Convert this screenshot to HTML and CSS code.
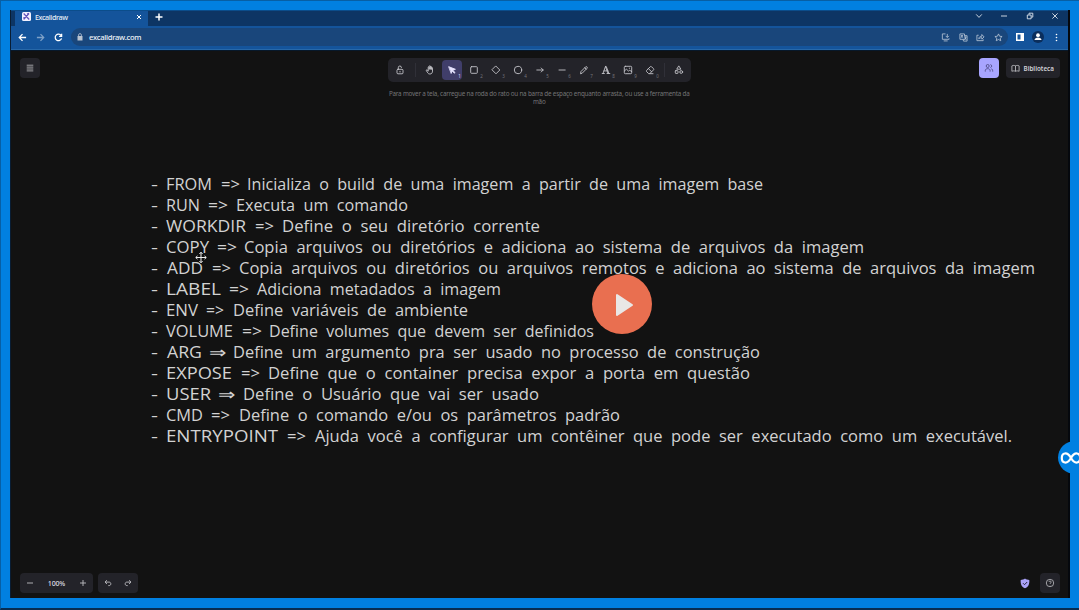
FILE: index.html
```html
<!DOCTYPE html>
<html lang="pt">
<head>
<meta charset="utf-8">
<title>Excalidraw</title>
<link rel="stylesheet" href="styles.css">
</head>
<body>
<main class="screen">
  <section class="browser">
    <header class="tabs">
      <div class="tab">
        <svg class="logo" viewBox="0 0 9 9"><rect width="9" height="9" rx="1.5" fill="#f4f2ff"/><path d="M1.7 1.5 7.2 7.5M7 1.5 1.8 7.4M5 2l2-.7M2 5v2.5" stroke="#6355bb" stroke-width="1.2"/></svg>
        <span class="tab-title">Excalidraw</span>
        <svg class="tab-close" viewBox="0 0 6 6"><path d="m1 1 4 4M5 1 1 5"/></svg>
      </div>
      <svg class="new-tab" viewBox="0 0 8 8"><path d="M4 .5v7M.5 4h7"/></svg>
      <div class="window-buttons">
        <svg viewBox="0 0 8 8"><path d="m1.2 2.4 2.8 3 2.8-3"/></svg>
        <svg viewBox="0 0 8 8"><path d="M1 4h6"/></svg>
        <svg viewBox="0 0 8 8"><path d="M1.3 3h3.8v3.8H1.3zM3 2.8V1.2h3.8v3.9H5.2"/></svg>
        <svg viewBox="0 0 8 8"><path d="m1.4 1.4 5.2 5.2m0-5.2L1.4 6.6"/></svg>
      </div>
    </header>
    <nav class="address-row">
      <svg class="nav" viewBox="0 0 10 10"><path d="M9 5H1.5M5 1.3 1.4 5 5 8.7"/></svg>
      <svg class="nav faded" viewBox="0 0 10 10"><path d="M1 5h7.5M5 1.3 8.6 5 5 8.7"/></svg>
      <svg class="nav" viewBox="0 0 10 10"><path d="M8 3A3.6 3.6 0 1 0 8.4 6M8.5.8v2.9H5.6"/></svg>
      <div class="address">
        <svg class="lock" viewBox="0 0 6 8"><path d="M.5 3h5v4.5h-5z" fill="#b9c3d0"/><path d="M1.6 3V2a1.4 1.4 0 0 1 2.8 0v1" fill="none" stroke="#b9c3d0" stroke-width=".8"/></svg>
        <span>excalidraw.com</span>
        <div class="address-icons">
          <svg viewBox="0 0 10 10"><path d="M5 1H1.5v6H9V6M3 8.8h4.4M7 1v3.8M5.2 3.2 7 5l1.8-1.8"/></svg>
          <svg viewBox="0 0 10 10"><path d="M1 1h5l1 6H1zM6 3h3v6H5L4.5 7M2.3 3h2.2M3.4 2.3c0 2-.7 2.8-1.4 3M2.6 3.5l2 1.6M6.6 4.5h1.8m-.9 0c0 1.4-.5 2-1 2.5m.2-1.5 1.5 1.7"/></svg>
          <svg viewBox="0 0 10 10"><path d="M3 2.5H1v6h7V7M3 6.4c.3-2 1.6-2.8 3.5-2.8V1.7L9 4.4 6.5 6.8V5.2C5 5.2 4 5.5 3 6.4z"/></svg>
          <svg viewBox="0 0 10 10"><path d="m5 1 1.2 2.6 2.8.3L6.9 5.8l.6 2.8L5 7.2 2.5 8.6l.6-2.8L1 3.9l2.8-.3z"/></svg>
        </div>
      </div>
      <svg class="panel" viewBox="0 0 8 8"><path d="M0 0h8v8H0z" fill="#fff"/><path d="M1.5 1.5h3v5h-3z" fill="#14549b"/></svg>
      <svg class="profile" viewBox="0 0 12 12"><circle cx="6" cy="6" r="6" fill="#0b2e5c"/><circle cx="6" cy="4.2" r="1.9" fill="#fff"/><path d="M2.5 9c0-3.5 7-3.5 7 0z" fill="#fff"/></svg>
      <svg class="dots" viewBox="0 0 3 8"><circle cx="1.5" cy="1" r=".8"/><circle cx="1.5" cy="4" r=".8"/><circle cx="1.5" cy="7" r=".8"/></svg>
    </nav>

    <div class="app">
      <div class="app-top">
        <button class="square"><svg viewBox="0 0 10 10"><path d="M1.7 2.2h6.6M1.7 4.1h6.6M1.7 6h6.6M1.7 7.9h6.6"/></svg></button>
        <div class="tool-column">
          <div class="toolbar">
            <span class="tool"><svg viewBox="0 0 10 10"><rect x="2" y="4.3" width="6" height="4.5" rx="1"/><path d="M3.3 4.2V2.7a1.6 1.6 0 0 1 3.2-.2M5 6.3v.7"/></svg></span>
            <i class="divider"></i>
            <span class="tool"><svg viewBox="0 0 10 10"><path d="M3.2 5.8V2.4c0-.9 1-.9 1 0v2-3c0-.9 1.1-.9 1.1 0v3-2.5c0-.9 1.1-.9 1.1 0v2.6-1.4c0-.9 1.1-.9 1.1 0v3c0 1.8-1 2.9-2.5 2.9-1.3 0-2-.5-2.7-1.8L1.3 5.5c-.2-.8.7-1 1.1-.5z"/></svg></span>
            <span class="tool active"><svg viewBox="0 0 10 10"><path d="m2 1.8 6.4 2.5-2.6 1L8 7.6l-.6.6-2.3-2.3-.8 2.2z"/></svg><small>1</small></span>
            <span class="tool"><svg viewBox="0 0 10 10"><rect x="1.7" y="1.7" width="6.6" height="6.6" rx=".8"/></svg><small>2</small></span>
            <span class="tool"><svg viewBox="0 0 10 10"><path d="m5 1.2 3.8 3.8L5 8.8 1.2 5z"/></svg><small>3</small></span>
            <span class="tool"><svg viewBox="0 0 10 10"><circle cx="5" cy="5" r="3.7"/></svg><small>4</small></span>
            <span class="tool"><svg viewBox="0 0 10 10"><path d="M1.8 5h6.4M6.2 3l2 2-2 2"/></svg><small>5</small></span>
            <span class="tool"><svg viewBox="0 0 10 10"><path d="M2 5h6.2"/></svg><small>6</small></span>
            <span class="tool"><svg viewBox="0 0 10 10"><path d="M1.6 8.4 2 6.5l4.6-4.6c.9-.9 2.3.5 1.4 1.4L3.5 7.9zM5.8 2.8l1.4 1.4"/></svg><small>7</small></span>
            <span class="tool"><svg viewBox="0 0 10 10"><path d="M1.2 8.5h2.2M6 8.5h2.8M2 8.4l2.5-7h.7l2.7 7M3 5.9h3.8M4.5 1.5 7 8.4"/></svg><small>8</small></span>
            <span class="tool"><svg viewBox="0 0 10 10"><rect x="1.3" y="1.3" width="7.4" height="7.4" rx="1"/><path d="m1.4 6 2-1.8 2.3 2 1-1 2 1.5M6.4 3.1v.3"/></svg><small>9</small></span>
            <span class="tool"><svg viewBox="0 0 10 10"><path d="M8 8.7H3.7L1.6 6.6c-.4-.4-.4-.8 0-1.2l3.7-3.7c.4-.4.8-.4 1.2 0l2 2c.4.4.4.8 0 1.2L4.8 8.6M3.5 3.7l3 3"/></svg><small>0</small></span>
            <i class="divider late"></i>
            <span class="tool"><svg viewBox="0 0 10 10"><path d="m5 1.2 1.9 3H3.1z"/><rect x="1.3" y="5.7" width="2.7" height="2.7" rx=".5"/><circle cx="7.2" cy="7" r="1.4"/></svg></span>
          </div>
          <p class="hint">Para mover a tela, carregue na roda do rato ou na barra de espaço enquanto arrasta, ou use a ferramenta da<br>mão</p>
        </div>
        <div class="right-tools">
          <button class="square people"><svg viewBox="0 0 10 10"><circle cx="3.7" cy="3" r="1.5"/><path d="M1.3 8.6V7.4c0-2.3 4.8-2.3 4.8 0v1.2M6.4 1.6c1.8.2 1.8 2.7 0 2.9M7.3 5.8c1 .2 1.4.8 1.4 2.8"/></svg></button>
          <button class="library"><svg viewBox="0 0 10 10"><path d="M5 2.1C3.7 1.4 2.3 1.4 1 2.1v6c1.3-.6 2.7-.6 4 0 1.3-.6 2.7-.6 4 0v-6c-1.3-.7-2.7-.7-4 0zm0 0v6"/></svg>Biblioteca</button>
        </div>
      </div>
      <div class="app-bottom">
        <div class="zoom-box"><svg viewBox="0 0 8 8"><path d="M1 4h6"/></svg><span>100%</span><svg viewBox="0 0 8 8"><path d="M1 4h6M4 1v6"/></svg></div>
        <div class="history"><svg viewBox="0 0 8 8"><path d="M3 1.2 1 3.1 3 5M1.1 3.1h4c2.3 0 2.3 3.5 0 3.5h-.8"/></svg><svg viewBox="0 0 8 8"><path d="m5 1.2 2 1.9L5 5M6.9 3.1h-4c-2.3 0-2.3 3.5 0 3.5h.8"/></svg></div>
        <svg class="shield" viewBox="0 0 10 11"><path d="M5 .5c1.3 1 2.7 1.4 4.3 1.4.3 4-.9 7-4.3 8.4C1.6 8.9.4 5.9.7 1.9 2.3 1.9 3.7 1.5 5 .5z" fill="#aaa2f8"/><path d="m3 5.2 1.5 1.5L7.2 4" fill="none" stroke="#24213e" stroke-width="1"/></svg>
        <button class="square"><svg viewBox="0 0 10 10"><circle cx="5" cy="5" r="3.7"/><path d="M3.9 4c.1-1.4 2.3-1.3 2.3.1C6.2 5 5 5 5 5.9M5 7v.3"/></svg></button>
      </div>
    </div>
  </section>

  <svg class="drawing" viewBox="0 0 1079 610">
    <g id="notes"></g>
    <g class="move-cursor" transform="translate(201 257.5)"><path class="cursor-edge" d="M0-5v10M-5 0H5M-1.6-3.5 0-5.3l1.6 1.8M-1.6 3.5 0 5.3l1.6-1.8M-3.5-1.6-5.3 0l1.8 1.6M3.5-1.6 5.3 0 3.5 1.6"/><path d="M0-5v10M-5 0H5M-1.6-3.5 0-5.3l1.6 1.8M-1.6 3.5 0 5.3l1.6-1.8M-3.5-1.6-5.3 0l1.8 1.6M3.5-1.6 5.3 0 3.5 1.6"/></g>
  </svg>
  <button class="play"><svg viewBox="0 0 60 60"><path d="M25 21v20l15-10z" fill="#e9e7e6" stroke="#e9e7e6" stroke-width="2" stroke-linejoin="round"/></svg></button>
  <div class="badge"><svg viewBox="0 0 34 34"><path d="M13 17C9 10 3.8 12 3.8 17S9 24 13 17s9.2-5 9.2 0-5.2 7-9.2 0z" fill="none" stroke="#fff" stroke-width="2.2"/></svg></div>
</main>
<script src="notes.js"></script>
</body>
</html>
```

FILE: styles.css
```css
* { box-sizing: border-box; }
body { margin: 0; font-family: "Noto Sans", sans-serif; }
button { border: 0; padding: 0; font: inherit; }
svg { display: block; flex: none; }
.screen { position: relative; width: 1079px; height: 610px; overflow: hidden; background: #0180e1; border-top: 1px solid #075fa5; border-left: 1px solid #075fa5; border-bottom: 2px solid #082d51; padding: 9px 9px 10px; }
.browser { height: 588px; width: 1060px; background: #121212; border-left: 1px solid #091d33; border-right: 2px solid #05080d; display: flex; flex-direction: column; }
.tabs { height: 16px; background: #0d3564; border-top: 1px solid #0b4d8b; display: flex; align-items: center; }
.tab { width: 133px; margin-left: 4px; height: 15px; background: #14549b; display: flex; align-items: center; padding: 0 6px 4px 7px; color: #e7edf5; }
.logo { width: 9px; height: 9px; }
.tab-title { font-size: 7.2px; margin-left: 4px; letter-spacing: -.4px; flex: 1; font-weight: 500; }
.tab-close { width: 6px; height: 6px; stroke: #fff; stroke-width: 1; }
.new-tab { width: 8px; height: 8px; margin: 0 0 4px 7px; stroke: #fff; stroke-width: 1.5; }
.window-buttons { margin: 0 9px 6px auto; display: flex; gap: 17.5px; }
.window-buttons svg { width: 8px; height: 8px; fill: none; stroke: #dce4ed; stroke-width: .9; }
.address-row { height: 24px; background: #14549b; border-bottom: 1px solid #2768a9; display: flex; align-items: center; padding: 0 8px 1px 7px; }
.nav { width: 9px; height: 9px; margin-right: 9px; fill: none; stroke: #fff; stroke-width: 1.4; }
.nav.faded { stroke: #7da0c7; }
.nav:nth-child(3) { margin-right: 8px; }
.address { flex: 1; height: 18px; background: #19467b; border-radius: 9px; display: flex; align-items: center; padding-left: 6px; font-size: 7.6px; letter-spacing: -.26px; font-weight: 500; color: #eef2f7; }
.lock { width: 6px; height: 8px; margin-right: 6px; }
.address-icons { margin-left: auto; margin-right: 5px; display: flex; gap: 8.6px; }
.address-icons svg { width: 9px; height: 9px; fill: none; stroke: #bac7d7; stroke-width: .9; }
.panel { width: 8px; height: 8px; margin-left: 8px; }
.profile { width: 12px; height: 12px; margin-left: 8px; }
.dots { width: 3px; height: 9px; margin: 0 2px 0 11px; fill: #fff; }
.app { flex: 1; border-top: 1px solid #07182a; display: flex; flex-direction: column; justify-content: space-between; padding: 7px 8.5px 5px 9px; }
.app-top { display: flex; justify-content: space-between; align-items: flex-start; }
.square { width: 20px; height: 20px; border-radius: 4px; background: #232329; display: grid; place-items: center; }
.square svg { width: 10px; height: 10px; fill: none; stroke: #bebec2; stroke-width: .8; }
.tool-column { width: 303px; margin-left: 60px; }
.toolbar { width: 303px; height: 24px; background: #232329; border-radius: 5px; display: flex; align-items: center; padding-left: 2px; }
.tool { position: relative; width: 20px; height: 20px; margin-right: 2px; border-radius: 4px; display: grid; place-items: center; }
.tool svg { width: 10px; height: 10px; fill: none; stroke: #c4c4c9; stroke-width: .9; stroke-linecap: round; stroke-linejoin: round; }
.tool small { position: absolute; right: 1px; bottom: 0; font-size: 4.5px; line-height: 7px; color: #74747b; }
.tool.active { background: #403e6a; }
.tool.active svg { fill: #e6e4ff; stroke: #e6e4ff; }
.tool.active small { color: #e0dfff; }
.divider { width: 1px; height: 14px; background: #303038; margin: 0 4px 0 3px; }
.divider.late { margin: 0 4px 0 2px; }
.hint { margin: 8px 0 0; text-align: center; white-space: nowrap; color: #747476; font-size: 6.3px; letter-spacing: -.2px; line-height: 8px; }
.right-tools { display: flex; gap: 7px; }
.people { background: #a8a5ff; }
.people svg { stroke: #45427a; }
.library { width: 54px; height: 20px; border-radius: 4px; background: #232329; color: #d2d2d7; font-size: 6.3px; font-weight: 600; display: flex; align-items: center; gap: 4px; padding-left: 5px; }
.library svg { width: 9px; height: 9px; fill: none; stroke: #c8c8cc; stroke-width: .9; }
.app-bottom { display: flex; align-items: center; }
.zoom-box, .history { height: 20px; border-radius: 4px; background: #232329; color: #dedee2; font-size: 7px; font-weight: 500; letter-spacing: -.15px; display: flex; align-items: center; justify-content: space-between; }
.zoom-box { width: 73px; padding: 0 6px; }
.history { width: 40px; padding: 0 6px; margin-left: 5px; }
.zoom-box svg, .history svg { width: 8px; height: 8px; fill: none; stroke: #bdbdc2; stroke-width: .9; }
.shield { width: 10px; height: 11px; margin: 0 10px 0 auto; }
.drawing { position: absolute; left: -1px; top: -1px; width: 1079px; height: 610px; pointer-events: none; }
.drawing text { fill: #d2d2d2; font-family: "Open Sans", "Noto Sans", sans-serif; font-size: 15.5px; font-weight: 400; word-spacing: 4px; }
.drawing .double-arrow { font-family: "DejaVu Sans", sans-serif; font-weight: 200; }
.move-cursor { fill: none; stroke: #eee; stroke-width: 1; }
.cursor-edge { stroke: #111; stroke-width: 2.4; }
.play { position: absolute; left: 591px; top: 273px; width: 60px; height: 60px; border-radius: 50%; background: #e96f50; }
.badge { position: absolute; left: 1057px; top: 440px; width: 34px; height: 33px; border-radius: 50%; background: #0180e1; }
```

FILE: notes.js
```js
// Each row: keyword, keyword left/right, arrow, arrow left/right, description, description left/right.
const rows = [
  ["FROM", 166, 212, "=>", 221, 240, "Inicializa o build de uma imagem a partir de uma imagem base", 247, 763],
  ["RUN", 166, 200, "=>", 208, 228, "Executa um comando", 236, 408],
  ["WORKDIR", 166, 246, "=>", 255, 274, "Define o seu diretório corrente", 282, 540],
  ["COPY", 166, 209, "=>", 217, 237, "Copia arquivos ou diretórios e adiciona ao sistema de arquivos da imagem", 244, 864],
  ["ADD", 167, 203, "=>", 212, 231, "Copia arquivos ou diretórios ou arquivos remotos e adiciona ao sistema de arquivos da imagem", 239, 1035],
  ["LABEL", 166, 221, "=>", 229, 249, "Adiciona metadados a imagem", 257, 501],
  ["ENV", 166, 198, "=>", 206, 224, "Define variáveis de ambiente", 233, 468],
  ["VOLUME", 166, 233, "=>", 242, 262, "Define volumes que devem ser definidos", 269, 594],
  ["ARG", 167, 202, "⇒", 209, 226, "Define um argumento pra ser usado no processo de construção", 233, 760],
  ["EXPOSE", 166, 232, "=>", 241, 260, "Define que o container precisa expor a porta em questão", 268, 750],
  ["USER", 166, 211, "⇒", 218, 235, "Define o Usuário que vai ser usado", 243, 539],
  ["CMD", 166, 203, "=>", 211, 230, "Define o comando e/ou os parâmetros padrão", 239, 620],
  ["ENTRYPOINT", 166, 278, "=>", 287, 306, "Ajuda você a configurar um contêiner que pode ser executado como um executável.", 315, 1012],
];
const notes = document.getElementById("notes");
function addText(text, left, right, y) {
  const el = document.createElementNS("http://www.w3.org/2000/svg", "text");
  el.textContent = text;
  if (text === "⇒") el.setAttribute("class", "double-arrow");
  el.setAttribute("x", left);
  el.setAttribute("y", y);
  el.setAttribute("textLength", right - left);
  el.setAttribute("lengthAdjust", "spacingAndGlyphs");
  notes.append(el);
}
rows.forEach((r, i) => {
  const y = 189.5 + i * 21.04;
  addText("-", 151, 158, y);
  addText(r[0], r[1], r[2], y);
  addText(r[3], r[4], r[5], y);
  addText(r[6], r[7], r[8], y);
});
```
